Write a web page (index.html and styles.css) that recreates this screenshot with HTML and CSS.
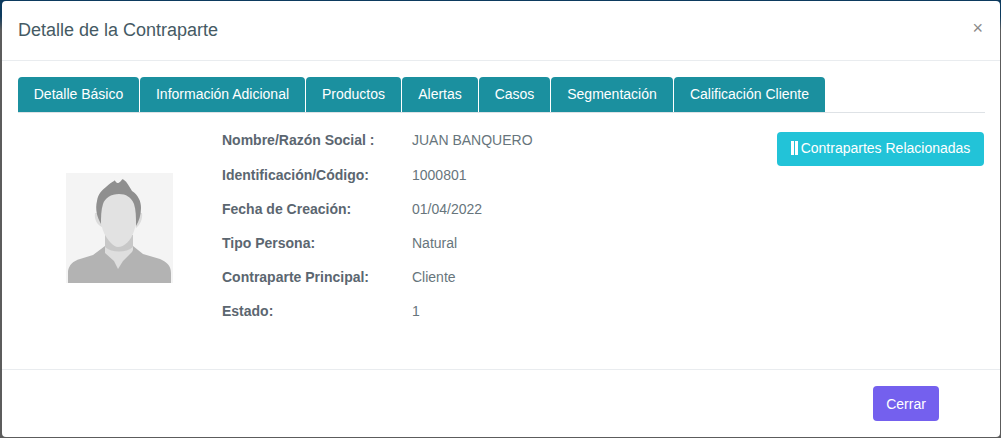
FILE: index.html
```html
<!DOCTYPE html>
<html lang="es">
<head>
<meta charset="utf-8">
<title>Detalle de la Contraparte</title>
<link rel="stylesheet" href="styles.css">
</head>
<body>
<div class="modal">
  <header class="modal-header">
    <h4 class="modal-title">Detalle de la Contraparte</h4>
    <span class="close">×</span>
  </header>
  <div class="modal-body">
    <ul class="tabs">
      <li class="tab t1">Detalle Básico</li>
      <li class="tab t2">Información Adicional</li>
      <li class="tab t3">Productos</li>
      <li class="tab t4">Alertas</li>
      <li class="tab t5">Casos</li>
      <li class="tab t6">Segmentación</li>
      <li class="tab t7">Calificación Cliente</li>
    </ul>
    <div class="content">
      <div class="photo">
        <svg class="avatar" width="107" height="110" viewBox="0 0 107 110">
          <rect width="107" height="110" fill="#f4f4f4"/>
          <path d="M2 110V98C3 92 7 88 14 86L27 82 39 73H67L77 81 94 86C101 89 105 93 105 100V110Z" fill="#b3b3b3"/>
          <path d="M39 66H67V77L66 79 57 88 52 96 48 88 39 80Z" fill="#dedede"/>
          <path d="M39 62H67V74C60 80 46 80 39 74Z" fill="#c8c8c8"/>
          <path d="M29 40C28 46 31 52 36 54L38 40ZM76 40C77 46 74 52 70 55L68 40Z" fill="#dcdcdc"/>
          <path d="M36 24C33 38 34 50 38 60 42 68 48 74 52 74 58 74 65 68 68 58 72 48 72 34 67 24 59 16 43 16 36 24Z" fill="#e2e2e2"/>
          <path d="M35 51C31 44 29 36 31 28 32 21 36 17 40 14 43 11 46 9 48 8 49 7 49 8 50 9 51 11 53 10 55 8 56 6 57 6 58 7 61 9 63 13 66 18 72 22 75 28 75 35 75 42 73 48 70 53 70 44 70 37 68 31 65 24 60 21 53 21 45 21 39 25 37 31 35 37 35 44 35 51Z" fill="#8f8f8f"/>
        </svg>
      </div>
      <dl class="details">
        <div class="row"><dt>Nombre/Razón Social :</dt><dd>JUAN BANQUERO</dd></div>
        <div class="row"><dt>Identificación/Código:</dt><dd>1000801</dd></div>
        <div class="row"><dt>Fecha de Creación:</dt><dd>01/04/2022</dd></div>
        <div class="row"><dt>Tipo Persona:</dt><dd>Natural</dd></div>
        <div class="row"><dt>Contraparte Principal:</dt><dd>Cliente</dd></div>
        <div class="row"><dt>Estado:</dt><dd>1</dd></div>
      </dl>
      <button class="btn-related"><span class="bars"></span>Contrapartes Relacionadas</button>
    </div>
  </div>
  <footer class="modal-footer">
    <button class="btn-close">Cerrar</button>
  </footer>
</div>
</body>
</html>
```
FILE: styles.css
```css
* { box-sizing: border-box; }
html, body { margin: 0; height: 100%; }
body {
  width: 1001px;
  height: 438px;
  overflow: hidden;
  padding: 1px 1px 1px 2px;
  background: linear-gradient(#0c3a5e 0, #0c3a5e 16px, #5c5c5c 30px, #5c5c5c 100%);
  font-family: "Liberation Sans", Arial, sans-serif;
  color: #54667a;
}
.modal {
  height: 436px;
  background: #fff;
  border-radius: 4px;
  display: flex;
  flex-direction: column;
}
.modal-header {
  height: 60px;
  flex: none;
  border-bottom: 1px solid #e9ecef;
  display: flex;
  justify-content: space-between;
  align-items: flex-start;
  padding: 0 17px 0 16px;
}
.modal-title {
  margin: 18px 0 0;
  font-size: 18px;
  line-height: 22px;
  font-weight: 400;
  color: #455a64;
}
.close {
  margin-top: 17px;
  font-size: 18px;
  line-height: 20px;
  color: #8a8a8a;
}
.modal-body {
  flex: 1;
  padding: 16px 15px 0 16px;
}
.tabs {
  list-style: none;
  margin: 0;
  padding: 0;
  height: 36px;
  display: flex;
  gap: 1px;
  border-bottom: 1px solid #dee2e6;
}
.tab {
  height: 35px;
  background: #1b909f;
  color: #fff;
  font-size: 14px;
  line-height: 34px;
  text-align: center;
  border-radius: 4px 4px 0 0;
}
.t1 { width: 121px; }
.t2 { width: 165px; }
.t3 { width: 95px; }
.t4 { width: 76px; }
.t5 { width: 71px; }
.t6 { width: 122px; }
.t7 { width: 151px; }
.content {
  display: flex;
  align-items: flex-start;
}
.photo {
  width: 204px;
  padding: 60px 0 0 48px;
  flex: none;
}
.avatar { display: block; }
.details {
  margin: 17px 0 0;
  width: 555px;
  flex: none;
}
.row {
  display: flex;
  height: 34px;
  font-size: 14px;
  line-height: 20px;
}
.row:first-child { height: 35px; }
.row dt {
  width: 190px;
  font-weight: 700;
  color: #5b6670;
}
.row dd {
  margin: 0;
  color: #67757c;
}
.btn-related {
  margin-top: 19px;
  width: 207px;
  height: 34px;
  border: 0;
  border-radius: 4px;
  background: #22c3d8;
  color: #fff;
  font: 14px/30px "Liberation Sans", Arial, sans-serif;
  padding: 0 0 2px;
  display: flex;
  align-items: center;
  justify-content: center;
  gap: 3px;
}
.bars {
  width: 7px;
  height: 14px;
  border-left: 3px solid #fff;
  border-right: 3px solid #fff;
}
.modal-footer {
  height: 68px;
  flex: none;
  border-top: 1px solid #e9ecef;
  display: flex;
  justify-content: flex-end;
  padding: 16px 61px 0 0;
}
.btn-close {
  width: 66px;
  height: 35px;
  border: 0;
  border-radius: 4px;
  background: #7460ee;
  color: #fff;
  font: 14px "Liberation Sans", Arial, sans-serif;
  padding: 0;
}
```
